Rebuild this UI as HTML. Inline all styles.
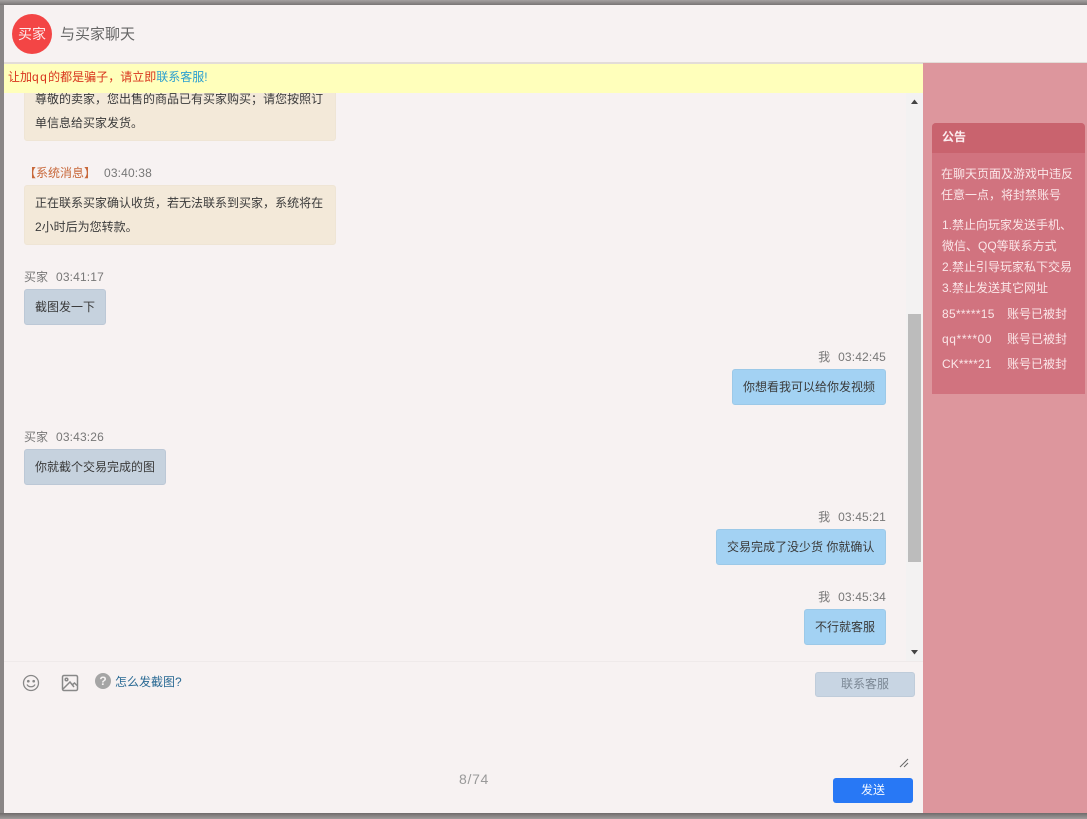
<!DOCTYPE html>
<html lang="zh"><head><meta charset="utf-8"><style>
html,body{margin:0;padding:0;width:1087px;height:819px;overflow:hidden;background:#8a8686}
body{position:relative;font-family:"Liberation Sans","Noto Sans CJK SC",sans-serif;font-size:12px;color:#333}
div,a,span.a{position:absolute;white-space:nowrap}
.t{font-size:12px;color:#777;line-height:16px;height:16px}
.c{letter-spacing:.15px;margin-left:8px}
.p{font-family:"Liberation Sans","Noto Sans CJK TC",sans-serif}
.b{border-radius:3px;box-sizing:border-box;font-size:12px;line-height:24px;color:#3a3a3a}
.u{background:#c6d2de;border:1px solid #bcc8d6;height:36px;line-height:32px;padding-left:10px;padding-top:1px}
.m{background:#a3d2f3;border:1px solid #9cc9e8;height:36px;line-height:32px;padding-left:10px;padding-top:1px}
.s{background:#f3e9d9;border:1px solid #efe5d5;left:24px;width:312px;padding:0 10px}
.n{left:942px;color:#fbe6e8;font-size:12px;line-height:20px}
.l{letter-spacing:.3px}
</style></head><body>
<div style="left:4px;top:5px;width:1083px;height:808px;background:#f7f2f2"></div>
<div style="left:0;top:0;width:1087px;height:5px;background:linear-gradient(#a5a1a1,#797575)"></div>
<div style="left:0;top:813px;width:1087px;height:6px;background:linear-gradient(#6f6b6b,#a09c9c)"></div>

<div style="left:12px;top:14px;width:40px;height:40px;border-radius:50%;background:#f34545;color:#fdeaea;font-size:14px;line-height:40px;text-align:center">买家</div>
<div style="left:60px;top:25px;font-size:15px;line-height:20px;color:#666">与买家聊天</div>
<div style="left:4px;top:62px;width:1083px;height:2px;background:#e3ddd8"></div>

<div class="s b" style="top:88px;height:53px"><span style="display:block;margin-top:-2px">尊敬的卖家<span class="p">，</span>您出售的商品已有买家购买<span class="p">；</span>请您按照订<br>单信息给买家发货。</span></div>
<div style="left:4px;top:64px;width:919px;height:29px;background:#ffffbb;font-size:12px;line-height:27px;padding-left:4px;box-sizing:border-box;color:#d8341c;margin:0">让加<span style="letter-spacing:1.400px">qq</span>的都是骗子<span class="p">，</span>请立即<span style="color:#2b9fd0">联系客服</span><span style="color:#2b9fd0">!</span></div>

<div class="t" style="left:24px;top:165px"><span style="color:#c8683a">【系统消息】</span><span class="c">03:40:38</span></div>
<div class="s b" style="top:185px;height:60px;padding-top:5px">正在联系买家确认收货<span class="p">，</span>若无法联系到买家<span class="p">，</span>系统将在<br>2小时后为您转款。</div>

<div class="t" style="left:24px;top:269px">买家<span class="c">03:41:17</span></div>
<div class="u b" style="left:24px;top:289px;width:82px">截图发一下</div>
<div class="t" style="right:201px;top:349px">我<span class="c">03:42:45</span></div>
<div class="m b" style="left:732px;top:369px;width:154px">你想看我可以给你发视频</div>
<div class="t" style="left:24px;top:429px">买家<span class="c">03:43:26</span></div>
<div class="u b" style="left:24px;top:449px;width:142px">你就截个交易完成的图</div>
<div class="t" style="right:201px;top:509px">我<span class="c">03:45:21</span></div>
<div class="m b" style="left:716px;top:529px;width:170px">交易完成了没少货 你就确认</div>
<div class="t" style="right:201px;top:589px">我<span class="c">03:45:34</span></div>
<div class="m b" style="left:804px;top:609px;width:82px">不行就客服</div>

<div style="left:906px;top:93px;width:17px;height:568px;background:#f3f2f2"></div>
<div style="left:908px;top:314px;width:13px;height:248px;background:#bcbcbc"></div>
<svg style="position:absolute;left:906px;top:93px" width="17" height="568"><path d="M5 11L12 11L8.500 6.500Z" fill="#444"/><path d="M5 557L12 557L8.500 561.500Z" fill="#444"/></svg>

<div style="left:4px;top:661px;width:919px;height:1px;background:#efeaea"></div>
<svg style="position:absolute;left:22px;top:674px" width="18" height="18" fill="none" stroke="#888" stroke-width="1.300"><circle cx="9" cy="9" r="7.500"/><circle cx="6.300" cy="7.200" r=".7" fill="#888"/><circle cx="11.700" cy="7.200" r=".7" fill="#888"/><path d="M5 10.500C6.500 13.500 11.500 13.500 13 10.500"/></svg>
<svg style="position:absolute;left:61px;top:674px" width="18" height="18" fill="none" stroke="#888" stroke-width="1.500"><rect x="1.500" y="1.500" width="15" height="15" rx="1.500"/><circle cx="5.500" cy="5.500" r="1.300"/><path d="M2 15L9 8L13 13M11 11L13.500 9L16 11.500"/></svg>
<div style="left:95px;top:673px;width:16px;height:16px;border-radius:50%;background:#a5a5a5;color:#f5f2f2;font-size:12px;font-weight:bold;line-height:16px;text-align:center">?</div>
<div style="left:115px;top:674px;font-size:12px;line-height:16px;color:#2a6a94">怎么发截图?</div>
<div style="left:815px;top:672px;width:100px;height:25px;border-radius:3px;background:#c8d5e3;border:1px solid #bfccda;box-sizing:border-box;color:#7b8794;font-size:12px;line-height:23px;padding-left:25px">联系客服</div>
<svg style="position:absolute;left:899px;top:758px" width="10" height="10" stroke="#666" stroke-width="1"><path d="M1 9L9 1M5 9L9 5"/></svg>
<div style="left:459px;top:770px;font-size:14px;line-height:18px;color:#999;letter-spacing:.7px">8/74</div>
<div style="left:833px;top:778px;width:80px;height:25px;border-radius:3px;background:#2878f5;color:#f2f7ff;font-size:12px;line-height:25px;text-align:center">发送</div>

<div style="left:923px;top:63px;width:164px;height:750px;background:#dd969d"></div>
<div style="left:932px;top:123px;width:153px;height:271px;background:#d1737f;border-radius:4px 4px 0 0"></div>
<div style="left:932px;top:123px;width:153px;height:30px;background:#c9636e;border-radius:4px 4px 0 0;color:#fdeef0;font-size:12px;font-weight:bold;line-height:29px;padding-left:10px;box-sizing:border-box">公告</div>
<div class="n" style="top:164px;line-height:21px;left:941px">在聊天页面及游戏中违反<br>任意一点<span class="p">，</span>将封禁账号</div>
<div class="n" style="top:215px;line-height:21px">1.禁止向玩家发送手机、<br>微信、QQ等联系方式<br>2.禁止引导玩家私下交易<br>3.禁止发送其它网址</div>
<div class="n l" style="top:304px">85*****15</div><div class="n" style="top:304px;left:1007px">账号已被封</div>
<div class="n l" style="top:329px;letter-spacing:.6px">qq****00</div><div class="n" style="top:329px;left:1007px">账号已被封</div>
<div class="n" style="top:354px;letter-spacing:.1px">CK****21</div><div class="n" style="top:354px;left:1007px">账号已被封</div>
</body></html>
